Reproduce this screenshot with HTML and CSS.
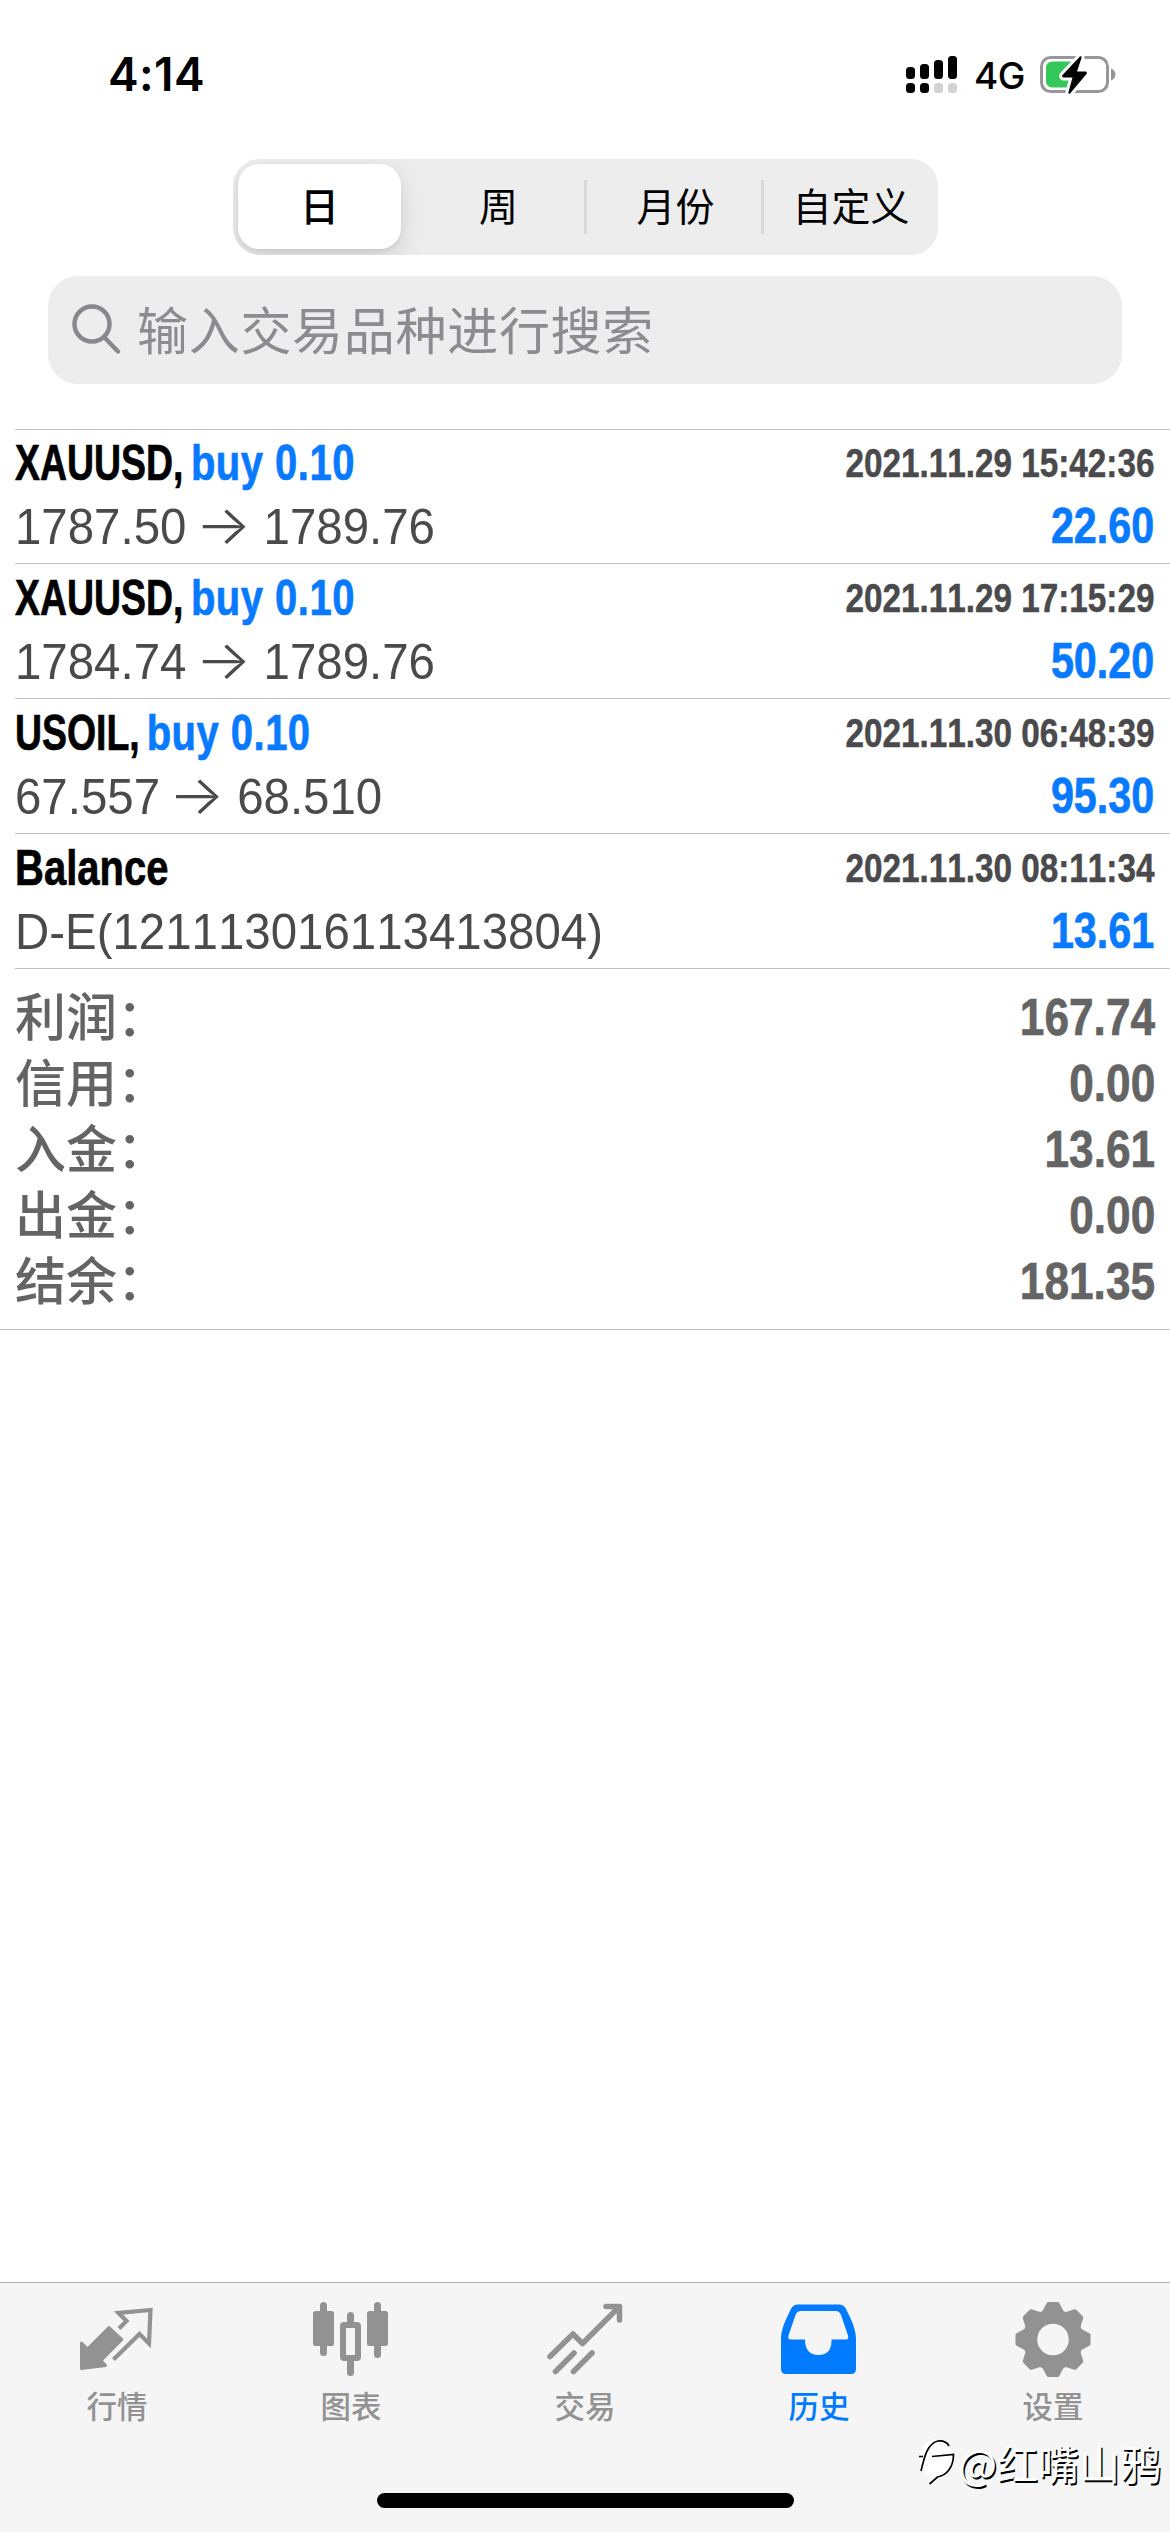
FILE: index.html
```html
<!DOCTYPE html>
<html lang="zh-CN">
<head>
<meta charset="utf-8">
<title>历史</title>
<link rel="stylesheet" href="styles.css">
</head>
<body>
<div class="screen">
  <header class="status">
    <span class="clock">4:14</span>
    <div class="status-right">
      <svg class="signal" width="52" height="38" viewBox="0 0 52 38">
        <g fill="#000">
          <rect x="0" y="12" width="9" height="12" rx="3.5"/><rect x="14" y="9" width="9" height="15" rx="3.5"/>
          <rect x="28" y="5" width="9" height="19" rx="3.5"/><rect x="42" y="1" width="9" height="23" rx="3.5"/>
          <rect x="0" y="28" width="9" height="10" rx="3.5"/><rect x="14" y="28" width="9" height="10" rx="3.5"/>
        </g>
        <g fill="#d2d2d2"><rect x="28" y="28" width="9" height="10" rx="3.5"/><rect x="42" y="28" width="9" height="10" rx="3.5"/></g>
      </svg>
      <span class="network">4G</span>
      <svg class="battery" width="78" height="42" viewBox="0 0 78 42">
        <rect x="1.5" y="4.5" width="66" height="34" rx="9" fill="none" stroke="#98969b" stroke-width="3"/>
        <path d="M71 15.500c6 2 6 10 0 12z" fill="#98969b"/>
        <path d="M12 8.500h24v26H12a6 6 0 0 1-6-6v-14a6 6 0 0 1 6-6z" fill="#34c759"/>
        <path d="M39 4.500L22.500 22a1.500 1.500 0 0 0 1 2.500h9L28.500 39c-.5 2 1 2.500 2 1L46.500 21a1.500 1.500 0 0 0-1-2.500h-8.500L41.500 5c.5-2-1.500-2.500-2.500-.5z" stroke="#fff" stroke-width="6" fill="#fff"/>
        <path d="M39 4.500L22.500 22a1.500 1.500 0 0 0 1 2.500h9L28.500 39c-.5 2 1 2.500 2 1L46.500 21a1.500 1.500 0 0 0-1-2.500h-8.500L41.500 5c.5-2-1.500-2.500-2.500-.5z" fill="#000"/>
      </svg>
    </div>
  </header>

  <nav class="segments">
    <span class="segment selected">日</span>
    <span class="segment">周</span>
    <span class="segment divided">月份</span>
    <span class="segment divided">自定义</span>
  </nav>

  <div class="search">
    <svg width="50" height="52" viewBox="0 0 50 52" fill="none" stroke="#89898d" stroke-width="4.500" stroke-linecap="round">
      <circle cx="20" cy="20" r="17.500"/><path d="M33 34l13 13.500"/>
    </svg>
    <span>输入交易品种进行搜索</span>
  </div>

  <main class="deals">
    <article class="deal">
      <div class="line"><span class="title"><span class="symbol">XAUUSD, </span><span class="side">buy 0.10</span></span><time>2021.11.29 15:42:36</time></div>
      <div class="line"><span class="price">1787.50 <i>→</i> 1789.76</span><b class="amount">22.60</b></div>
    </article>
    <article class="deal">
      <div class="line"><span class="title"><span class="symbol">XAUUSD, </span><span class="side">buy 0.10</span></span><time>2021.11.29 17:15:29</time></div>
      <div class="line"><span class="price">1784.74 <i>→</i> 1789.76</span><b class="amount">50.20</b></div>
    </article>
    <article class="deal">
      <div class="line"><span class="title"><span class="symbol short">USOIL, </span><span class="side">buy 0.10</span></span><time>2021.11.30 06:48:39</time></div>
      <div class="line"><span class="price">67.557 <i>→</i> 68.510</span><b class="amount">95.30</b></div>
    </article>
    <article class="deal">
      <div class="line"><span class="title">Balance</span><time>2021.11.30 08:11:34</time></div>
      <div class="line"><span class="price">D-E(121113016113413804)</span><b class="amount">13.61</b></div>
    </article>
  </main>

  <section class="totals">
    <div class="total"><span>利润：</span><b>167.74</b></div>
    <div class="total"><span>信用：</span><b>0.00</b></div>
    <div class="total"><span>入金：</span><b>13.61</b></div>
    <div class="total"><span>出金：</span><b>0.00</b></div>
    <div class="total"><span>结余：</span><b>181.35</b></div>
  </section>

  <footer class="tabbar">
    <div class="tabs">
      <div class="tab">
        <svg width="80" height="80" viewBox="77 2300 80 80">
          <path d="M81.500 2343l6 6L109 2327.500 121.800 2339.500 101 2360.500 105.500 2365.500 81.500 2368.500z" fill="currentColor" stroke="currentColor" stroke-width="3" stroke-linejoin="round"/>
          <path d="M119 2328.500l7.500-7.500-8-8 32-3-1.500 33.500-9.500-9.500-26 25.500" fill="none" stroke="currentColor" stroke-width="4.200"/>
        </svg>
        <span>行情</span>
      </div>
      <div class="tab">
        <svg width="80" height="80" viewBox="311 2300 80 80" fill="currentColor">
          <rect x="320" y="2302" width="7" height="54" rx="3.500"/><rect x="313" y="2311" width="21" height="35" rx="2.500"/>
          <rect x="374" y="2302" width="7" height="56" rx="3.500"/><rect x="367" y="2311" width="21" height="35" rx="2.500"/>
          <rect x="347" y="2312" width="7" height="16" rx="3.500"/><rect x="347" y="2355" width="7" height="21" rx="3.500"/>
          <rect x="343" y="2325" width="15" height="33" rx="1" fill="none" stroke="currentColor" stroke-width="6"/>
        </svg>
        <span>图表</span>
      </div>
      <div class="tab">
        <svg width="80" height="80" viewBox="545 2300 80 80" fill="none" stroke="currentColor" stroke-width="5.500" stroke-linecap="round" stroke-linejoin="round">
          <path d="M550 2356.500l23-22.500 9.500 9.500L619 2307M606 2306.500h13.500V2320M555.500 2371.500l18.500-18.500M573.500 2371.500l18.500-18.500"/>
        </svg>
        <span>交易</span>
      </div>
      <div class="tab active">
        <svg width="80" height="80" viewBox="779 2300 80 80" fill="currentColor">
          <path fill-rule="evenodd" d="M798 2304.500h41q5 0 7 4.500c5 10 10 20 10 30v30q0 5-5 5h-65q-5 0-5-5v-30c0-10 5-20 10-30q2-4.500 7-4.500zM801 2311q-4 0-5.500 4l-7 20.500q-1 4 2 4h14.500q0 15.500 13.500 15.500t13-15.500h14.500q3 0 2-4l-7-20.500q-1.500-4-5.500-4z"/>
        </svg>
        <span>历史</span>
      </div>
      <div class="tab">
        <svg width="80" height="80" viewBox="-40 -39.500 80 80" fill="currentColor" stroke="currentColor" stroke-linejoin="round">
          <circle r="23" fill="none" stroke-width="14.500"/>
          <g stroke-width="4"><path id="tooth" d="M-4.500-35.500h9L9-27H-9z"/>
          <use href="#tooth" transform="rotate(45)"/><use href="#tooth" transform="rotate(90)"/><use href="#tooth" transform="rotate(135)"/><use href="#tooth" transform="rotate(180)"/><use href="#tooth" transform="rotate(225)"/><use href="#tooth" transform="rotate(270)"/><use href="#tooth" transform="rotate(315)"/></g>
        </svg>
        <span>设置</span>
      </div>
    </div>
    <div class="home-indicator"></div>
    <div class="watermark">
      <svg width="42" height="48" viewBox="0 0 42 48" fill="none">
        <path d="M20 1a20 20 0 0 1 5 39l-10 6 1-8A20 20 0 0 1 20 1z" fill="#fff"/>
        <path d="M7 33c3-12 6-28 17-30 6-.5 9 1 11 5M5 18.500h4M18 18.500l21.500-2c0 13-7 21-16 22.500l-8 7" stroke="#000" stroke-width="1.700"/>
      </svg>
      <span>@红嘴山鸦</span>
    </div>
  </footer>
</div>
</body>
</html>
```
FILE: styles.css
```css
body {
  margin: 0;
  background: #fff;
  color: #000;
  font-family: "Noto Sans CJK SC", sans-serif;
}

.screen {
  display: flex;
  flex-direction: column;
  height: 2532px;
  width: 1170px;
  overflow: hidden;
}

/* Status bar */
.status {
  box-sizing: border-box;
  height: 159px;
  flex: none;
  display: flex;
  justify-content: space-between;
  align-items: flex-start;
  padding: 54px 52px 0 108px;
}

.clock {
  font: 600 46px/41px Inter, sans-serif;
  letter-spacing: 0.4px;
}

.status-right {
  display: flex;
  align-items: flex-start;
}

.signal {
  margin-top: 1px;
}

.network {
  font: 500 37px/42px Inter, sans-serif;
  margin: 1px 15px 0 16px;
  letter-spacing: -0.5px;
}

.battery {
  margin-top: -1px;
}

/* Period switch */
.segments {
  box-sizing: border-box;
  width: 705px;
  height: 96px;
  flex: none;
  margin: 0 0 0 233px;
  padding: 5px 0 6px 5px;
  display: grid;
  grid-template-columns: 172px 177px 177px 1fr;
  align-items: center;
  background: #ededee;
  border-radius: 27px;
  overflow: hidden;
}

.segment {
  font-size: 39px;
  height: 54px;
  line-height: 49px;
  text-align: center;
  font-weight: 400;
}

.segment.selected {
  width: 163px;
  height: 85px;
  line-height: 80px;
  background: #fff;
  border-radius: 21px;
  font-weight: 500;
  box-shadow: 0 9px 24px rgba(0, 0, 0, 0.13), 0 2px 4px rgba(0, 0, 0, 0.06);
}

.segment.divided {
  box-shadow: -3px 0 0 #d9d9db;
}

/* Search field */
.search {
  box-sizing: border-box;
  width: 1074px;
  height: 108px;
  flex: none;
  margin: 21px 48px 0;
  padding-left: 24px;
  display: flex;
  align-items: center;
  gap: 15px;
  background: #ededee;
  border-radius: 30px;
  color: #8c8c90;
  font-size: 51px;
  letter-spacing: 0.7px;
}

.search span {
  line-height: 72px;
  padding-bottom: 4px;
}

/* Deals */
.deals {
  margin: 45px 0 0 15px;
  border-bottom: 1px solid #c3c3c6;
  flex: none;
}

.deal {
  box-sizing: border-box;
  height: 135px;
  padding: 3px 16px 0 0;
  border-top: 1px solid #c3c3c6;
  font-family: "Liberation Sans", Arial, sans-serif;
  font-kerning: none;
}

.deal:first-child {
  height: 134px;
  padding-top: 2px;
}

.line {
  display: flex;
  justify-content: space-between;
  line-height: 63px;
  height: 63px;
  white-space: nowrap;
}

.title {
  font-size: 50px;
  font-weight: bold;
  transform: scaleX(0.8);
  transform-origin: left;
  -webkit-text-stroke: 0.7px currentColor;
}

.symbol {
  display: inline-block;
  margin-right: -19px;
  transform: scaleX(0.935);
  transform-origin: left;
  white-space: pre;
}

.symbol.short {
  margin-right: -16px;
}

.side {
  color: #077aff;
  letter-spacing: 0.6px;
}

time {
  font-size: 40px;
  font-weight: bold;
  color: #4a4a4d;
  transform: scaleX(0.832);
  transform-origin: right;
  -webkit-text-stroke: 0.5px currentColor;
}

.price {
  font-size: 49.500px;
  color: #4a4a4d;
  transform: scaleX(0.958);
  transform-origin: left;
}

.price i {
  display: inline-flex;
  justify-content: center;
  width: 53px;
  height: 40px;
  font: 300 54px/42px Inter, sans-serif;
  transform: translateX(-2px) scaleX(1.13);
}

.amount {
  font-size: 50px;
  color: #077aff;
  transform: scaleX(0.825);
  transform-origin: right;
  -webkit-text-stroke: 0.7px currentColor;
}

/* Totals */
.totals {
  box-sizing: border-box;
  height: 361px;
  flex: none;
  padding: 15px 15px 0;
  border-bottom: 1px solid #c3c3c6;
  color: #646464;
}

.total {
  display: flex;
  justify-content: space-between;
  height: 66px;
  line-height: 66px;
}

.total span {
  font-family: "Liberation Sans", "Noto Sans CJK SC", sans-serif;
  font-size: 51px;
  font-weight: 500;
  line-height: 69px;
}

.total b {
  font-family: "Liberation Sans", Arial, sans-serif;
  font-kerning: none;
  font-size: 52px;
  transform: scaleX(0.85);
  transform-origin: right;
  -webkit-text-stroke: 0.7px currentColor;
}

/* Tab bar */
.tabbar {
  box-sizing: border-box;
  position: relative;
  height: 250px;
  flex: none;
  margin-top: auto;
  border-top: 1px solid #b0b0b0;
  background: #f5f5f5;
}

.tabs {
  display: grid;
  grid-template-columns: repeat(5, 1fr);
  padding-top: 17px;
}

.tab {
  display: flex;
  flex-direction: column;
  align-items: center;
  color: #929292;
  font-size: 30.500px;
  line-height: 44px;
  font-weight: 500;
}

.tab span {
  margin-top: 3px;
}

.tab.active {
  color: #007aff;
}

.home-indicator {
  width: 417px;
  height: 15px;
  margin: 66px auto 0;
  border-radius: 8px;
  background: #000;
}

.watermark {
  position: absolute;
  right: 9px;
  top: 149px;
  display: flex;
  align-items: center;
  gap: 2px;
  color: #fff;
  font-size: 41px;
  line-height: 60px;
  text-shadow: 1.500px 1.500px 0 #000;
}
```
